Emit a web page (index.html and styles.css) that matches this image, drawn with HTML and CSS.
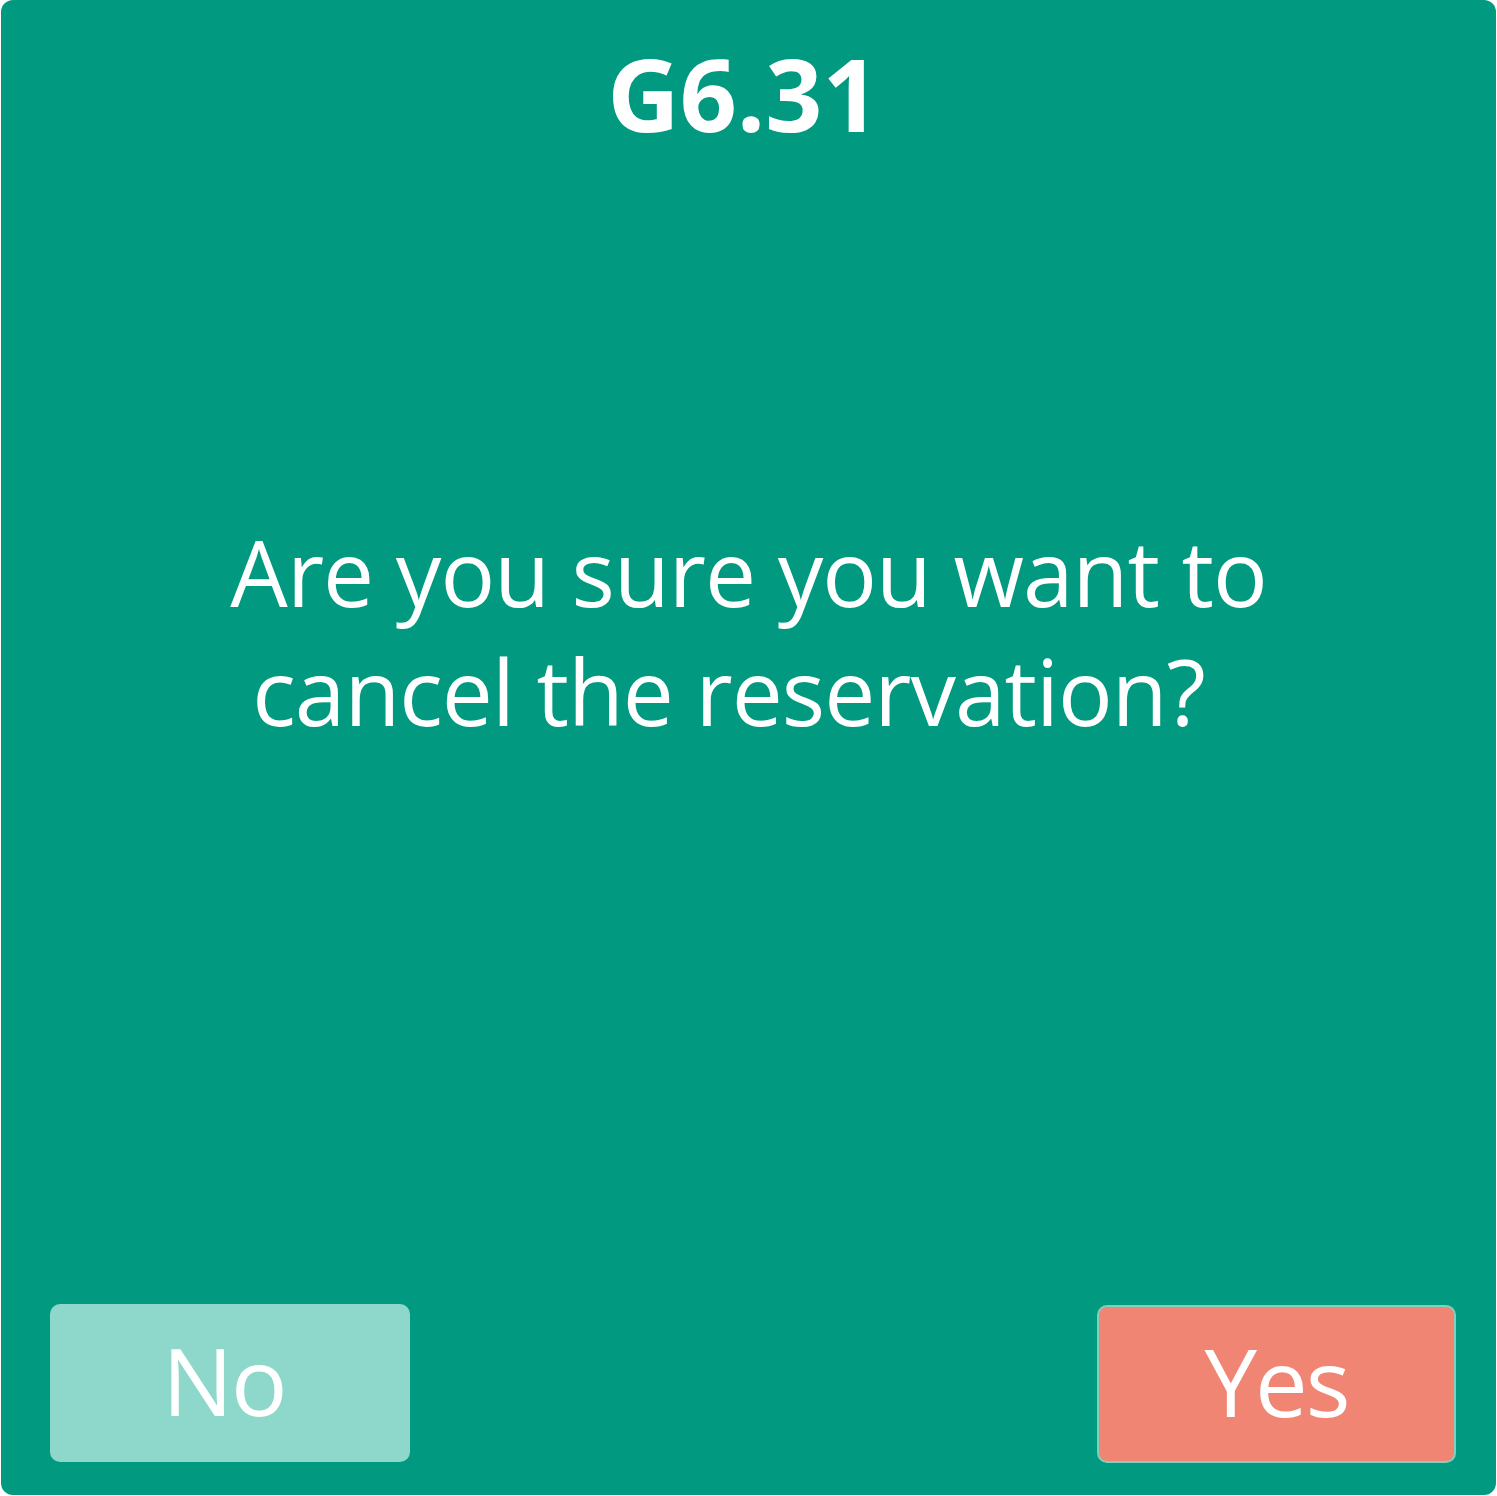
FILE: index.html
```html
<!DOCTYPE html>
<html lang="en">
<head>
<meta charset="utf-8">
<title>G6.31</title>
<link rel="stylesheet" href="styles.css">
</head>
<body>
<div class="card">
  <h1 class="title">G6.31</h1>
  <p class="message"><span class="line">Are you sure you want to</span><span class="line line-second">cancel the reservation?</span></p>
  <div class="actions">
    <button class="btn btn-no">No</button>
    <button class="btn btn-yes">Yes</button>
  </div>
</div>
</body>
</html>
```
FILE: styles.css
```css
html, body {
  margin: 0;
  padding: 0;
  background: #ffffff;
}
body {
  padding-left: 1px;
  font-family: "Open Sans", "Noto Sans", sans-serif;
}
.card {
  box-sizing: border-box;
  width: 1495px;
  height: 1495px;
  background: #019a81;
  border-radius: 12px;
  display: flex;
  flex-direction: column;
  align-items: center;
  color: #ffffff;
}
.title {
  margin: 28px 0 0 0;
  padding-right: 10px;
  font-size: 100px;
  font-weight: 700;
  line-height: 130px;
  letter-spacing: 0;
}
.message {
  margin: 355px 0 0 0;
  font-size: 91px;
  font-weight: 400;
  line-height: 119px;
  text-align: center;
  letter-spacing: -1px;
  display: flex;
  flex-direction: column;
  align-items: center;
}
.line {
  display: block;
}
.line-second {
  margin-right: 40px;
}
.actions {
  margin-top: auto;
  align-self: stretch;
  display: flex;
  justify-content: space-between;
  align-items: flex-start;
  padding: 0 40px 32px 49px;
}
.btn {
  box-sizing: border-box;
  width: 360px;
  height: 158px;
  border-radius: 10px;
  font-family: inherit;
  font-size: 94px;
  font-weight: 400;
  letter-spacing: -2px;
  color: #ffffff;
  display: flex;
  align-items: center;
  justify-content: center;
  padding: 0 0 6px 0;
}
.btn-no {
  background: #8dd8ca;
  border: none;
  padding-right: 12px;
}
.btn-yes {
  width: 359px;
  margin-top: 1px;
  background: #ef8572;
  border: 2px solid #7dd1bd;
}
```
